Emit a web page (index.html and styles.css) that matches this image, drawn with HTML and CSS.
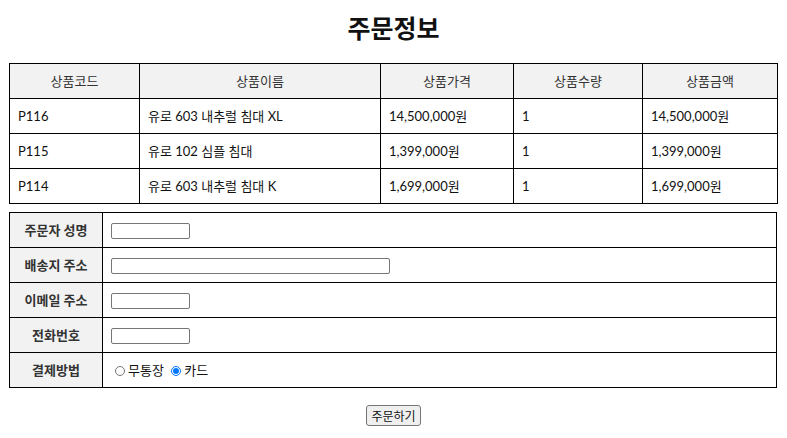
FILE: index.html
```html
<!DOCTYPE html>
<html lang="ko">
<head>
  <meta charset="UTF-8" />
  <title>주문정보</title>
  <link rel="stylesheet" href="styles.css">
</head>
<body>
  <h1>주문정보</h1>

  <!-- 주문 상품 목록 -->
  <table class="items">
    <thead>
      <tr>
        <th class="c-code">상품코드</th>
        <th class="c-name">상품이름</th>
        <th class="c-price">상품가격</th>
        <th class="c-qty">상품수량</th>
        <th class="c-total">상품금액</th>
      </tr>
    </thead>
    <tbody>
      <tr>
        <td>P116</td>
        <td>유로 603 내추럴 침대 XL</td>
        <td>14,500,000원</td>
        <td>1</td>
        <td>14,500,000원</td>
      </tr>
      <tr>
        <td>P115</td>
        <td>유로 102 심플 침대</td>
        <td>1,399,000원</td>
        <td>1</td>
        <td>1,399,000원</td>
      </tr>
      <tr>
        <td>P114</td>
        <td>유로 603 내추럴 침대 K</td>
        <td>1,699,000원</td>
        <td>1</td>
        <td>1,699,000원</td>
      </tr>
    </tbody>
  </table>

  <!-- 주문자 정보 -->
  <form class="order" onsubmit="return false">
    <table class="info">
      <tr>
        <th>주문자 성명</th>
        <td><input type="text" class="short" name="name"></td>
      </tr>
      <tr>
        <th>배송지 주소</th>
        <td><input type="text" class="long" name="addr"></td>
      </tr>
      <tr>
        <th>이메일 주소</th>
        <td><input type="text" class="short" name="email"></td>
      </tr>
      <tr>
        <th>전화번호</th>
        <td><input type="text" class="short" name="tel"></td>
      </tr>
      <tr>
        <th>결제방법</th>
        <td class="pay">
          <label><input type="radio" name="pay" value="bank">무통장</label>
          <label><input type="radio" name="pay" value="card" checked>카드</label>
        </td>
      </tr>
    </table>

    <div class="submit">
      <button type="submit">주문하기</button>
    </div>
  </form>
</body>
</html>
```

FILE: styles.css
```css
* {
  box-sizing: border-box;
}

body {
  margin: 0;
  padding: 0 9px;
  font-family: Lato, "Noto Sans CJK KR", sans-serif;
  font-size: 13px;
  color: #111;
  background: #fff;
}

h1 {
  margin: 0;
  padding-top: 12px;
  height: 63px;
  text-align: center;
  font-size: 25px;
  font-weight: 700;
  line-height: 32px;
}

table {
  width: 768px;
  border-collapse: collapse;
  table-layout: fixed;
}

th,
td {
  border: 1px solid #000;
  height: 35px;
  padding: 0 8px;
  line-height: 18px;
}

/* 상품 목록 */
.items th {
  background: #f2f2f2;
  font-weight: 400;
  color: #333;
  text-align: center;
}

.items td {
  text-align: left;
}

.c-code { width: 130px; }
.c-name { width: 241px; }
.c-price { width: 133px; }
.c-qty { width: 129px; }
.c-total { width: 135px; }

/* 주문자 정보 */
.order {
  margin-top: 8px;
}

.info th {
  width: 93px;
  background: #f2f2f2;
  font-weight: 700;
  color: #333;
  text-align: center;
}

.info td {
  padding-left: 8px;
}

input[type="text"] {
  height: 16px;
  margin: 0;
  padding: 0 2px;
  border: 1px solid #767676;
  border-radius: 2px;
  font-size: 12px;
  vertical-align: middle;
}

input.short {
  width: 79px;
}

input.long {
  width: 279px;
}

input[type="radio"] {
  width: 10px;
  height: 10px;
  margin: 0 3px 0 4px;
  vertical-align: -1px;
}

.submit {
  padding-top: 17px;
  text-align: center;
}

button {
  height: 21px;
  padding: 0 4px;
  font-family: "Noto Sans CJK KR", sans-serif;
  font-size: 12px;
  color: #111;
  background: #efefef;
  border: 1px solid #767676;
  border-radius: 3px;
}
```
